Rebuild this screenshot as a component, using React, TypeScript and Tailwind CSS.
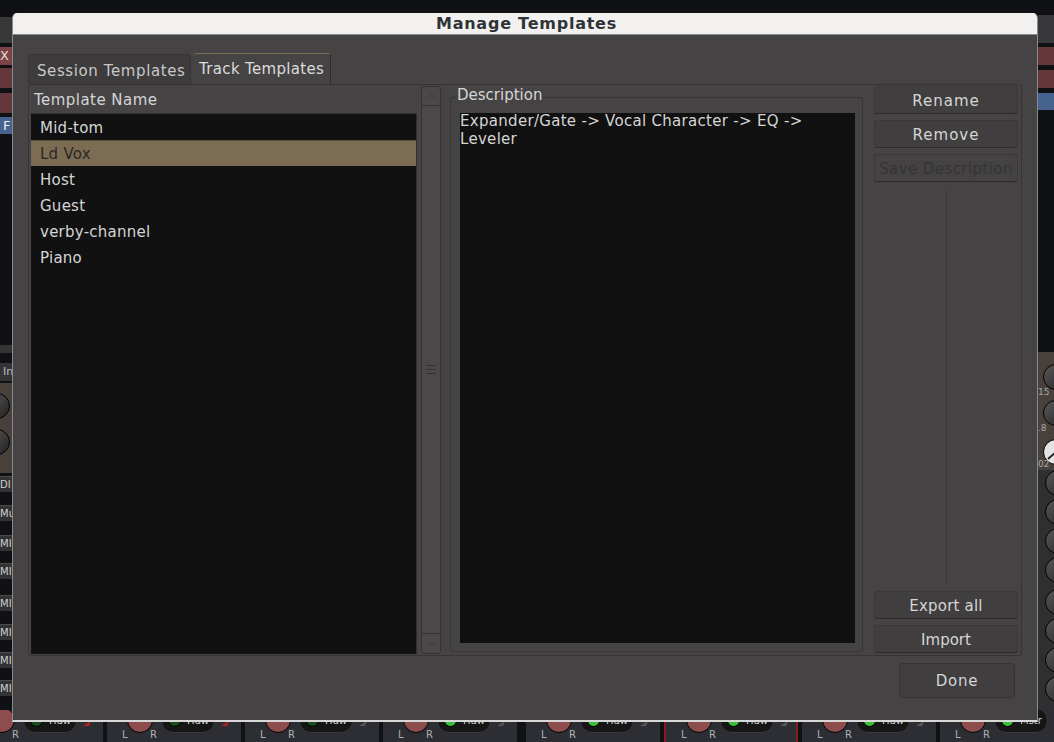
import { FC, ReactNode } from 'react';

const templates = ['Mid-tom', 'Ld Vox', 'Host', 'Guest', 'verby-channel', 'Piano'];

const Knob: FC<{ lit?: boolean; className: string }> = ({ lit, className }) => (
  <div
    className={`w-[26px] h-[26px] rounded-full shrink-0 border border-black ${
      lit ? 'bg-[#e4e4e4]' : 'bg-gradient-to-br from-[#5a5a5a] to-[#242424]'
    } ${className}`}
  >
    {lit && (
      <svg width="24" height="24" viewBox="0 0 24 24">
        <path d="M12 12 L4 19" stroke="#222" strokeWidth="2" fill="none" />
      </svg>
    )}
  </div>
);

const MixerTab: FC<{ label: string; className: string }> = ({ label, className }) => (
  <div
    className={`h-[16px] bg-[#333335] border-t border-[#4a4a4a] text-[10px] leading-[16px] text-[#cfcfcf] overflow-hidden whitespace-nowrap ${className}`}
  >
    {label}
  </div>
);

const LeftStrip = () => (
  <div className="w-[12px] h-[722px] flex flex-col overflow-hidden shrink-0 font-['DejaVu_Sans',sans-serif]">
    <div className="h-[17px]" />
    <div className="h-[26px] bg-[#38383a]" />
    <div className="h-[18px] mt-[4px] bg-[#7a4347] text-[13px] leading-[18px] text-[#e8d8d8] whitespace-nowrap">X</div>
    <div className="h-[20px] mt-[3px] bg-[#64383b]" />
    <div className="h-[20px] mt-[5px] bg-[#64383b]" />
    <div className="h-[17px] mt-[4px] bg-[#46638f] text-[13px] leading-[17px] text-[#e8eef8] pl-[3px]">F</div>
    <div className="h-[8px] mt-[211px] bg-[#343436]" />
    <div className="h-[18px] mt-[10px] bg-[#343436] text-[11px] leading-[18px] text-[#bbb] pl-[3px] whitespace-nowrap">In</div>
    <div className="h-[90px] mt-[2px] bg-[#47403b] flex flex-col gap-[10px] pt-[10px]">
      <Knob className="-ml-[16px]" />
      <Knob className="-ml-[16px]" />
    </div>
    <MixerTab label="DI" className="mt-[3px]" />
    <MixerTab label="Mu" className="mt-[13px]" />
    <MixerTab label="MI" className="mt-[14px]" />
    <MixerTab label="MI" className="mt-[12px]" />
    <MixerTab label="MI" className="mt-[16px]" />
    <MixerTab label="MI" className="mt-[13px]" />
    <MixerTab label="MI" className="mt-[12px]" />
    <MixerTab label="MI" className="mt-[12px]" />
  </div>
);

const RightStrip = () => (
  <div className="w-[16px] h-[722px] flex flex-col overflow-hidden shrink-0 font-['DejaVu_Sans',sans-serif]">
    <div className="h-[15px]" />
    <div className="h-[28px] bg-[#38383a]" />
    <div className="h-[18px] mt-[4px] bg-[#64383b]" />
    <div className="h-[18px] mt-[5px] bg-[#64383b]" />
    <div className="h-[17px] mt-[5px] bg-[#46638f]" />
    <div className="h-[242px]" />
    <div className="relative h-[118px] bg-[#47403b] flex flex-col gap-[10px] pt-[12px] pl-[5px]">
      <Knob className="" />
      <Knob className="" />
      <Knob lit className="mt-[3px]" />
      <span className="absolute left-0 top-[34px] text-[9px] leading-[12px] text-[#a8a8a8]">15</span>
      <span className="absolute left-0 top-[70px] text-[9px] leading-[12px] text-[#a8a8a8]">.8</span>
      <span className="absolute left-0 top-[106px] text-[9px] leading-[12px] text-[#a8a8a8]">02</span>
    </div>
    <div className="flex-1 bg-[#2f2f31] flex flex-col pl-[7px] gap-[3px]">
      <Knob className="" />
      <Knob className="" />
      <Knob className="" />
      <Knob className="" />
      <Knob className="mt-[3px]" />
      <Knob className="" />
      <Knob className="" />
      <Knob className="" />
    </div>
  </div>
);

const ChannelCell: FC<{ lit?: boolean; label?: string; red?: boolean; hot?: boolean; className?: string }> = ({
  lit,
  label = 'Hdw',
  red,
  hot,
  className = '',
}) => (
  <div className={`w-[134px] h-[32px] shrink-0 bg-[#2c2e33] relative overflow-hidden ${red ? 'border-x-2 border-[#8c1c1c]' : ''} ${className}`}>
    <span className="absolute left-[15px] bottom-[0px] text-[10px] text-[#b0b0b0]">L</span>
    <span className="absolute left-[43px] bottom-[0px] text-[10px] text-[#b0b0b0]">R</span>
    <div className="absolute left-[20px] top-[-3px] w-[26px] h-[26px] rounded-full bg-[#8d4d4d] border border-black" />
    <div className="absolute left-[54px] top-[-2px] w-[54px] h-[25px] rounded-[12px] bg-[#161616] border border-[#3a3a3a] flex items-center pl-[6px] gap-[6px]">
      <div className={`w-[13px] h-[13px] rounded-full border border-black ${lit ? 'bg-[#3cc03c]' : 'bg-[#1b4a1d]'}`} />
      <span className="text-[10px] text-[#cfcfcf]">{label}</span>
    </div>
    <svg className="absolute left-[114px] top-[11px]" width="9" height="6" viewBox="0 0 9 6">
      <path d="M0 5 L8 0 L6 5 Z" fill={hot ? '#b82020' : '#55575c'} />
    </svg>
  </div>
);

const ActionButton: FC<{ children: ReactNode; disabled?: boolean; className?: string }> = ({ children, disabled, className = '' }) => (
  <button
    className={`w-[144px] h-[28px] pt-[3px] rounded-[3px] border border-[#3a3839] border-b-[#2c2a2b] text-[15px] leading-none ${
      disabled ? 'text-[#363435] bg-[#444243] tracking-[0.42px]' : 'text-[#d5d5d5] bg-[#403e3f]'
    } ${className}`}
  >
    {children}
  </button>
);

const Scrollbar = () => (
  <div className="w-[20px] ml-[4px] border border-[#343233] rounded-[3px] flex flex-col bg-[#4a4849]">
    <div className="h-[19px] border-b border-[#343233] flex items-center justify-center">
      <svg width="9" height="6" viewBox="0 0 9 6"><path d="M1 5 L4.5 1.5 L8 5" fill="none" stroke="#3a3839" strokeWidth="1" /></svg>
    </div>
    <div className="flex-1 flex items-center justify-center">
      <div className="flex flex-col gap-[3px]">
        <div className="w-[10px] h-px bg-[#343233]" />
        <div className="w-[10px] h-px bg-[#343233]" />
        <div className="w-[10px] h-px bg-[#343233]" />
      </div>
    </div>
    <div className="h-[20px] border-t border-[#343233] flex items-center justify-center">
      <svg width="9" height="6" viewBox="0 0 9 6"><path d="M1 1 L4.5 4.5 L8 1" fill="none" stroke="#3a3839" strokeWidth="1" /></svg>
    </div>
  </div>
);

const TemplatesDialog = () => (
  <div className="absolute left-[12px] top-[13px] w-[1026px] h-[709px] flex flex-col rounded-t-[5px] overflow-hidden border-x border-[#8a8a8a] border-b-2 border-b-[#d8d8d8] bg-[#454344] font-['DejaVu_Sans',sans-serif]">
    <div className="h-[22px] shrink-0 bg-[#f2f1f0] border-b border-[#8a8a8a] text-center text-[16px] font-bold leading-[22px] text-[#2e3436] tracking-[0.76px] pl-[3px]">
      Manage Templates
    </div>

    <div className="flex pl-[15px] pt-[18px] h-[49px] shrink-0 items-end">
      <div className="w-[163px] h-[30px] bg-[#3d3b3c] border border-[#363435] border-b-0 rounded-t-[4px] text-[15px] leading-[30px] pl-[8px] pt-px tracking-[0.6px] text-[#c8c8c8]">
        Session Templates
      </div>
      <div className="w-[138px] h-[31px] ml-[2px] bg-[#454344] border-t border-t-[#7a6a52] border-r border-r-[#2e2c2d] rounded-t-[4px] text-[15px] leading-[30px] pl-[6px] tracking-[0.33px] text-[#dcdcdc]">
        Track Templates
      </div>
    </div>

    <div className="ml-[15px] w-[994px] h-[572px] shrink-0 border border-[#363435] rounded-[3px] flex p-[1px]">
      <div className="w-[387px] flex flex-col shrink-0">
        <div className="h-[28px] shrink-0 text-[15px] leading-[28px] pl-[4px] tracking-[0.46px] text-[#d5d5d5] border-b border-[#353334]">
          Template Name
        </div>
        <div className="flex-1 ml-px bg-[#111111] border-r border-[#2e2c2d]">
          {templates.map((t) =>
            t === 'Ld Vox' ? (
              <div
                key={t}
                className="h-[26px] pl-[9px] border-t border-[#5c5040] bg-[#7d6c54] text-[15px] leading-[26px] tracking-[0.25px] text-[#2a2822]"
              >
                {t}
              </div>
            ) : (
              <div key={t} className="h-[26px] pl-[9px] pt-px text-[15px] leading-[27px] tracking-[0.25px] text-[#d5d5d5]">
                {t}
              </div>
            ),
          )}
        </div>
      </div>

      <Scrollbar />

      <div className="relative ml-[9px] w-[413px] mt-[11px] mb-[2px] border border-[#363435] rounded-[3px] pt-[15px] pl-[9px] pr-[7px] pb-[8px] flex">
        <span className="absolute left-[5px] top-[-12px] px-[1px] bg-[#454344] text-[15px] leading-[18px] text-[#d5d5d5]">
          Description
        </span>
        <div className="flex-1 bg-[#111111] text-[15px] leading-[18px] text-[#d5d5d5] tracking-[0.3px]">
          <div className="-mt-px">
            Expander/Gate -&gt; Vocal Character -&gt; EQ -&gt;
            <br />
            Leveler
          </div>
        </div>
      </div>

      <div className="ml-[10px] w-[146px] flex flex-col items-center">
        <ActionButton className="tracking-[1px]">Rename</ActionButton>
        <ActionButton className="mt-[6px] tracking-[1px]">Remove</ActionButton>
        <ActionButton disabled className="mt-[6px]">Save Description</ActionButton>
        <div className="w-px flex-1 my-[8px] bg-[#363435]" />
        <ActionButton className="tracking-[0.2px]">Export all</ActionButton>
        <ActionButton className="mt-[6px] mb-[1px]">Import</ActionButton>
      </div>
    </div>

    <div className="flex justify-end pr-[22px] pt-[7px]">
      <button className="w-[116px] h-[35px] pt-px rounded-[3px] border border-[#353334] bg-[#403e3f] text-[15px] tracking-[0.7px] text-[#d5d5d5]">
        Done
      </button>
    </div>
  </div>
);

export default function App() {
  return (
    <div className="relative w-[1054px] h-[742px] overflow-hidden bg-[#101114] font-['DejaVu_Sans',sans-serif]">
      <div className="flex justify-between h-[710px]">
        <LeftStrip />
        <RightStrip />
      </div>
      <div className="flex gap-[4px] ml-[-31px]">
        <ChannelCell hot />
        <ChannelCell hot />
        <ChannelCell />
        <ChannelCell lit />
        <ChannelCell lit className="ml-[5px]" />
        <ChannelCell lit red />
        <ChannelCell lit />
        <ChannelCell lit label="Mstr" />
      </div>
      <TemplatesDialog />
    </div>
  );
}
